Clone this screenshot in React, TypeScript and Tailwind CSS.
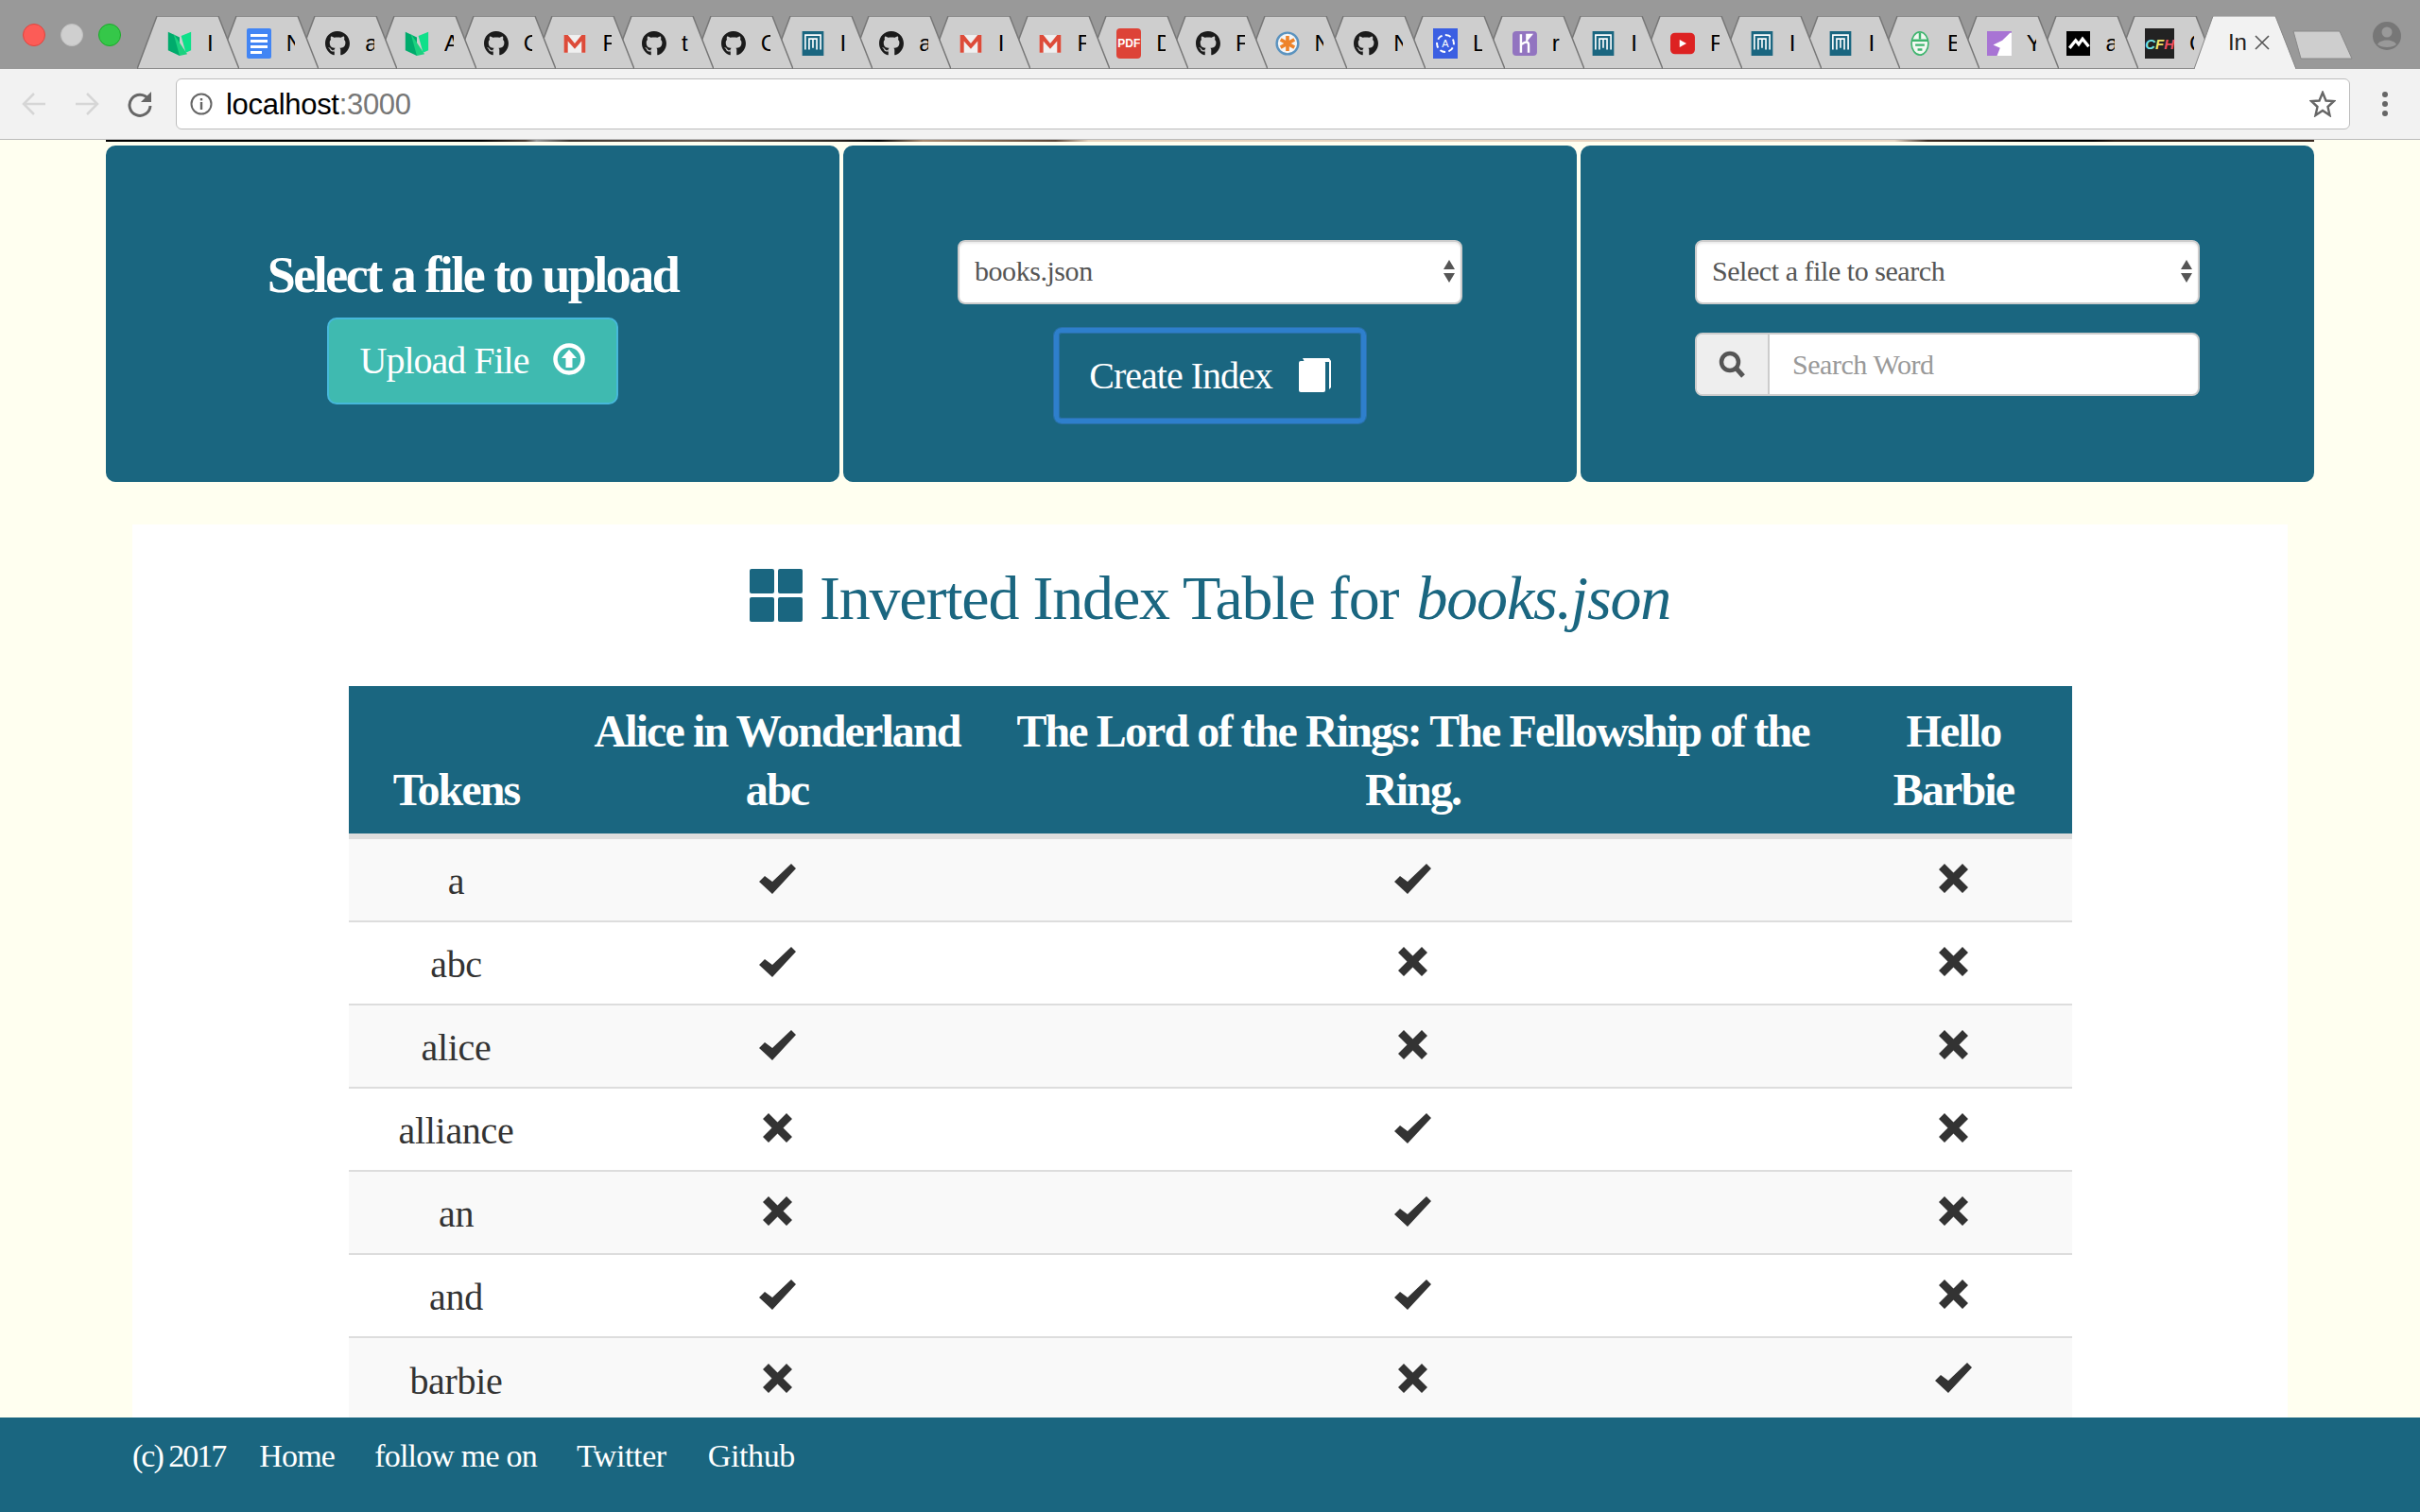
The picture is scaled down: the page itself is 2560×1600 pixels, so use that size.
import { FaGithub } from 'react-icons/fa';

const serif = { fontFamily: '"Liberation Serif", serif' };

type Fav = 'medium' | 'docs' | 'github' | 'gmail' | 'logo' | 'pdf' | 'orange' | 'angular' | 'heroku' | 'youtube' | 'mask' | 'purple' | 'mountain' | 'cfh';

const tabs: [Fav, string][] = [
  ['medium', 'I'], ['docs', 'N'], ['github', 'a'], ['medium', 'A'], ['github', 'C'], ['gmail', 'F'],
  ['github', 't'], ['github', 'C'], ['logo', 'I'], ['github', 'a'], ['gmail', 'I'], ['gmail', 'F'],
  ['pdf', 'D'], ['github', 'F'], ['orange', 'N'], ['github', 'N'], ['angular', 'L'], ['heroku', 'r'],
  ['logo', 'I'], ['youtube', 'F'], ['logo', 'I'], ['logo', 'I'], ['mask', 'E'], ['purple', 'Y'],
  ['mountain', 'a'], ['cfh', 'C'],
];

const rows: [string, boolean, boolean, boolean][] = [
  ['a', true, true, false],
  ['abc', true, false, false],
  ['alice', true, false, false],
  ['alliance', false, true, false],
  ['an', false, true, false],
  ['and', true, true, false],
  ['barbie', false, false, true],
];

function Favicon({ kind }: { kind: Fav }) {
  switch (kind) {
    case 'medium':
      return (
        <svg viewBox="0 0 32 32" className="w-8 h-8">
          <polygon points="1,1 16,8 16,32 1,25" fill="#00ab6c" />
          <polygon points="8,3 26,30 16,32" fill="#1bd17f" />
          <polygon points="18,6 31,1 31,25 24,28" fill="#0fe08a" />
        </svg>
      );
    case 'docs':
      return (
        <div className="w-8 h-8 rounded-[2px] bg-[#4285f4] flex flex-col items-center justify-center gap-[3px]">
          <div className="w-[18px] h-[3px] bg-white" />
          <div className="w-[18px] h-[3px] bg-white" />
          <div className="w-[18px] h-[3px] bg-white" />
          <div className="w-[12px] h-[3px] bg-white mr-[6px]" />
        </div>
      );
    case 'github':
      return <FaGithub className="w-8 h-8 text-[#1b1b1b]" />;
    case 'gmail':
      return (
        <svg viewBox="0 0 32 32" className="w-8 h-8">
          <rect x="2" y="5" width="28" height="23" fill="#f0f0f0" />
          <polygon points="2,5 7,5 16,16 25,5 30,5 30,28 25,28 25,13 16,23 7,13 7,28 2,28" fill="#dd4b39" />
        </svg>
      );
    case 'logo':
      return (
        <svg viewBox="0 0 32 32" className="w-8 h-8">
          <rect x="2" width="28" height="32" fill="#1a6680" />
          <path d="M6 24V5H26V24M11 24V10H16V22M16 10H21V24" fill="none" stroke="#fff" strokeWidth="2" />
        </svg>
      );
    case 'pdf':
      return (
        <div className="w-8 h-8 rounded-[4px] bg-[#dd4337] flex items-center justify-center text-white text-[12px] font-bold leading-none" style={{ fontFamily: '"Liberation Sans", sans-serif' }}>
          PDF
        </div>
      );
    case 'orange':
      return (
        <svg viewBox="0 0 32 32" className="w-8 h-8">
          <circle cx="16" cy="16" r="14" fill="#f5f5f5" stroke="#5b93bf" strokeWidth="3" />
          <path d="M16 6V26M7 11L25 21M7 21L25 11" stroke="#ee8329" strokeWidth="4.5" />
        </svg>
      );
    case 'angular':
      return (
        <div className="w-8 h-8 bg-[#3b5fe2] flex items-center justify-center">
          <div className="w-5 h-5 rounded-full border-2 border-dashed border-white text-white text-[11px] leading-4 text-center" style={{ fontFamily: '"Liberation Sans", sans-serif' }}>
            A
          </div>
        </div>
      );
    case 'heroku':
      return (
        <svg viewBox="0 0 32 32" className="w-8 h-8">
          <rect width="32" height="32" rx="5" fill="#9274c0" />
          <path d="M11 4V28M12 17C17 13 21 13 21 18V28M19 5L24 5L19 11Z" fill="none" stroke="#fff" strokeWidth="3" />
        </svg>
      );
    case 'youtube':
      return (
        <svg viewBox="0 0 32 32" className="w-8 h-8">
          <rect y="2" width="32" height="28" rx="6" fill="#dd2222" />
          <polygon points="12,11 21,16 12,21" fill="#fff" />
        </svg>
      );
    case 'mask':
      return (
        <svg viewBox="0 0 32 32" className="w-8 h-8">
          <ellipse cx="16" cy="16" rx="11" ry="15" fill="#f2f8f2" stroke="#3fb56f" strokeWidth="2" />
          <path d="M6 12H26M10 18H22M13 24H19M16 2V10" stroke="#3fb56f" strokeWidth="3" />
        </svg>
      );
    case 'purple':
      return (
        <svg viewBox="0 0 32 32" className="w-8 h-8">
          <rect width="32" height="32" fill="#a874d4" />
          <polygon points="30,2 32,2 32,32 13,32 17,22 8,18 20,12" fill="#fff" />
        </svg>
      );
    case 'mountain':
      return (
        <svg viewBox="0 0 32 32" className="w-8 h-8">
          <rect width="32" height="32" fill="#000" />
          <path d="M4 22L12 12L16 17L21 10L29 20" fill="none" stroke="#fff" strokeWidth="4" />
        </svg>
      );
    case 'cfh':
      return (
        <div className="w-8 h-8 bg-[#222] flex items-center justify-center text-[15px] italic font-bold leading-none" style={{ fontFamily: '"Liberation Sans", sans-serif' }}>
          <span className="text-[#6fe3e6]">C</span>
          <span className="text-[#f2e46b]">F</span>
          <span className="text-[#ee4d5f]">H</span>
        </div>
      );
  }
}

function Tab({ fav, label, index }: { fav: Fav; label: string; index: number }) {
  return (
    <div className="relative w-[83.7px] h-[56px] shrink-0" style={{ zIndex: 40 - index }}>
      <svg viewBox="0 0 108 56" className="absolute left-0 top-0 w-[108px] h-[56px]">
        <polygon points="0,56 21,0 86,0 108,56" fill="#cecece" stroke="#777" strokeWidth="1.5" />
      </svg>
      <div className="relative flex items-center h-full pl-[32px] gap-[16px] pt-[2px]">
        <Favicon kind={fav} />
        <span className="text-[24px] text-black w-[12px] overflow-hidden" style={{ fontFamily: '"Liberation Sans", sans-serif' }}>
          {label}
        </span>
      </div>
    </div>
  );
}

function BrowserChrome() {
  return (
    <div className="shrink-0" style={{ fontFamily: '"Liberation Sans", sans-serif' }}>
      <div className="h-[73px] bg-[#999999] flex items-end relative">
        <div className="flex items-center gap-[16px] pl-[24px] w-[145px] h-full shrink-0">
          <div className="w-6 h-6 rounded-full bg-[#fc5c57] border border-[#e0443e]" />
          <div className="w-6 h-6 rounded-full bg-[#cfcfcf] border border-[#c0c0c0]" />
          <div className="w-6 h-6 rounded-full bg-[#35c749] border border-[#1aab29]" />
        </div>
        <div className="flex items-end">
          {tabs.map(([fav, label], i) => (
            <Tab key={i} fav={fav} label={label} index={i} />
          ))}
          <div className="relative w-[106px] h-[56px] shrink-0 z-50">
            <svg viewBox="0 0 108 57" className="absolute left-0 top-0 w-[108px] h-[57px]">
              <polygon points="0,57 20,0 86,0 108,57" fill="#f2f2f2" />
              <path d="M0 56L20 0H86L108 56" fill="none" stroke="#888" strokeWidth="1" />
            </svg>
            <div className="relative flex items-center h-full pl-[36px] gap-[8px] text-[24px] text-[#222]">
              <span>In</span>
              <svg viewBox="0 0 16 16" className="w-4 h-4">
                <path d="M1 1L15 15M15 1L1 15" stroke="#555" strokeWidth="1.6" />
              </svg>
            </div>
          </div>
        </div>
        <svg viewBox="0 0 64 32" className="w-[64px] h-[32px] -ml-[2px] mb-[9px] shrink-0">
          <polygon points="1,1 50,1 63,30 9,30" fill="#cecece" stroke="#888" strokeWidth="1" />
        </svg>
        <svg viewBox="0 0 32 32" className="absolute right-[19px] top-[22px] w-8 h-8">
          <circle cx="16" cy="16" r="15" fill="#777" />
          <circle cx="16" cy="12" r="5.5" fill="#999" />
          <path d="M6 25C9 19 23 19 26 25C22 29 10 29 6 25Z" fill="#999" />
        </svg>
      </div>
      <div className="h-[75px] bg-[#f2f2f2] border-b border-[#bbbbbb] flex items-center">
        <div className="w-[186px] flex items-center pl-[22px] gap-[32px] shrink-0">
          <svg viewBox="0 0 28 28" className="w-7 h-7">
            <path d="M26 14H3M14 3L3 14L14 25" fill="none" stroke="#d6d6d6" strokeWidth="2.5" />
          </svg>
          <svg viewBox="0 0 28 28" className="w-7 h-7 -ml-[4px]">
            <path d="M2 14H25M14 3L25 14L14 25" fill="none" stroke="#d6d6d6" strokeWidth="2.5" />
          </svg>
          <svg viewBox="0 0 28 28" className="w-7 h-7 -ml-[4px]">
            <path d="M23 9A11 11 0 1 0 25 16" fill="none" stroke="#666" strokeWidth="3" />
            <polygon points="26,1 26,12 15,12" fill="#666" />
          </svg>
        </div>
        <div className="h-[54px] w-[2300px] bg-white border border-[#bdbdbd] rounded-[6px] flex items-center pl-[14px] pr-[14px] shrink-0">
          <svg viewBox="0 0 24 24" className="w-6 h-6 shrink-0">
            <circle cx="12" cy="12" r="10.5" fill="none" stroke="#666" strokeWidth="2" />
            <rect x="10.8" y="10" width="2.4" height="8" fill="#666" />
            <rect x="10.8" y="6" width="2.4" height="2.4" fill="#666" />
          </svg>
          <div className="ml-[14px] pt-[2px] text-[31px] tracking-[-0.3px] text-black">
            localhost<span className="text-[#777]">:3000</span>
          </div>
          <svg viewBox="0 0 28 28" className="w-7 h-7 ml-auto">
            <polygon points="14,2 17.5,10.5 26,11 19.5,17 21.5,26 14,21 6.5,26 8.5,17 2,11 10.5,10.5" fill="none" stroke="#666" strokeWidth="2.4" />
          </svg>
        </div>
        <div className="flex flex-col items-center gap-[4px] ml-[34px]">
          <div className="w-[6px] h-[6px] rounded-full bg-[#666]" />
          <div className="w-[6px] h-[6px] rounded-full bg-[#666]" />
          <div className="w-[6px] h-[6px] rounded-full bg-[#666]" />
        </div>
      </div>
    </div>
  );
}

function SelectBox({ value }: { value: string }) {
  return (
    <div className="relative w-[534px] h-[68px]">
      <select
        defaultValue={value}
        className="appearance-none w-full h-full pl-[16px] pb-[4px] bg-white border-2 border-[#cccccc] rounded-[8px] text-[30px] tracking-[-0.45px] text-[#555555] shadow-[inset_0_2px_2px_rgba(0,0,0,0.075)]"
        style={serif}
      >
        <option>{value}</option>
      </select>
      <svg viewBox="0 0 12 24" className="absolute right-[8px] top-[21px] w-3 h-6">
        <polygon points="6,0 12,10 0,10" fill="#555" />
        <polygon points="0,14 12,14 6,24" fill="#555" />
      </svg>
    </div>
  );
}

function CheckIcon() {
  return (
    <svg viewBox="0 0 39 32" className="inline-block w-[39px] h-8 align-middle">
      <polygon points="34,0 39,5 14,32 0,19 6,13 14,19" fill="#333" />
    </svg>
  );
}

function CrossIcon() {
  return (
    <svg viewBox="0 0 31 31" className="inline-block w-[31px] h-[31px] align-middle">
      <polygon points="0,6 6,0 15.5,9.5 25,0 31,6 21.5,15.5 31,25 25,31 15.5,21.5 6,31 0,25 9.5,15.5" fill="#333" />
    </svg>
  );
}

function Mark({ yes }: { yes: boolean }) {
  return (
    <td className="pb-[3px]">
      {yes ? <CheckIcon /> : <CrossIcon />}
    </td>
  );
}

function Panels() {
  return (
    <div className="grid grid-cols-3 gap-[4px] h-[356px] mt-[4px]">
      <div className="bg-[#1a6680] rounded-[10px] flex flex-col items-center pt-[108px]">
        <h2 className="text-[54px] leading-[58px] font-bold text-white tracking-[-2.5px]">Select a file to upload</h2>
        <button className="mt-[16px] w-[308px] h-[92px] flex items-center justify-center gap-[26px] bg-[#3fbab0] border-2 border-[#46b8da] rounded-[10px] text-white text-[40px] tracking-[-1px]" style={serif}>
          Upload File
          <svg viewBox="0 0 34 34" className="w-[34px] h-[34px] -mt-[4px]">
            <circle cx="17" cy="17" r="14.5" fill="none" stroke="#fff" strokeWidth="4.5" />
            <polygon points="17,7 25,16 20.5,16 20.5,26 13.5,26 13.5,16 9,16" fill="#fff" />
          </svg>
        </button>
      </div>
      <div className="bg-[#1a6680] rounded-[10px] flex flex-col items-center pt-[100px]">
        <SelectBox value="books.json" />
        <button className="mt-[25px] w-[330px] h-[101px] flex items-center justify-center gap-[28px] border-[5px] border-[#2e7fcc] rounded-[8px] shadow-[0_0_0_1px_#2a70a8,inset_0_0_0_1px_#2a70a8] text-white text-[40px] tracking-[-1px]" style={serif}>
          Create Index
          <svg viewBox="0 0 34 36" className="w-[34px] h-9 -mt-[2px]">
            <path d="M4 0H32L34 3V31L32 33V4H6Z" fill="#fff" />
            <rect y="3" width="28" height="33" rx="2" fill="#fff" />
          </svg>
        </button>
      </div>
      <div className="bg-[#1a6680] rounded-[10px] flex flex-col items-center pt-[100px]">
        <SelectBox value="Select a file to search" />
        <div className="mt-[30px] w-[534px] h-[67px] flex bg-white border-2 border-[#cccccc] rounded-[8px] overflow-hidden">
          <div className="w-[77px] bg-[#eeeeee] border-r-2 border-[#cccccc] flex items-center justify-center shrink-0">
            <svg viewBox="0 0 30 30" className="w-[30px] h-[30px]">
              <circle cx="12" cy="12" r="9" fill="none" stroke="#555" strokeWidth="4.5" />
              <path d="M18 18L26 27" stroke="#555" strokeWidth="5" />
            </svg>
          </div>
          <input
            placeholder="Search Word"
            className="flex-1 min-w-0 pl-[24px] text-[30px] tracking-[-0.45px] outline-none placeholder:text-[#999999]"
            style={serif}
          />
        </div>
      </div>
    </div>
  );
}

function IndexTable() {
  return (
    <table className="w-[1823px] table-fixed border-collapse text-center mx-auto">
      <colgroup>
        <col className="w-[228px]" />
        <col className="w-[451px]" />
        <col className="w-[894px]" />
        <col className="w-[250px]" />
      </colgroup>
      <thead>
        <tr className="bg-[#1a6680] text-white h-[159px] border-b-[6px] border-[#dddddd]">
          {['Tokens', 'Alice in Wonderland abc', 'The Lord of the Rings: The Fellowship of the Ring.', 'Hello Barbie'].map(h => (
            <th key={h} className="px-[24px] pb-[15px] align-bottom text-[48px] leading-[62px] font-bold tracking-[-1.9px]">
              {h}
            </th>
          ))}
        </tr>
      </thead>
      <tbody>
        {rows.map(([token, a, b, c], i) => (
          <tr key={token} className={`h-[88px] border-t-2 border-[#dddddd] first:border-t-0 first:h-[90px] ${i % 2 === 0 ? 'bg-[#f9f9f9]' : 'bg-white'}`}>
            <td className="text-[40px] tracking-[-0.3px] text-[#333333] pt-[4px]">{token}</td>
            <Mark yes={a} />
            <Mark yes={b} />
            <Mark yes={c} />
          </tr>
        ))}
      </tbody>
    </table>
  );
}

export default function App() {
  return (
    <div className="w-full h-screen flex flex-col overflow-hidden bg-[#fffff0]" style={serif}>
      <BrowserChrome />
      <main className="flex-1 min-h-0 overflow-hidden px-[112px]">
        <div className="h-[2px] bg-[linear-gradient(90deg,#000_0%,#000_17%,#4a3a30_19%,#999_19.5%,#3b342e_21%,#6a5a50_27%,#2a2520_33%,#000_35%,#a88a70_37%,#5c4536_43%,#e6d2bc_44.5%,#e8d6c4_81%,#3a2a20_82.5%,#000_87%,#000_90%,#2a1c14_91%,#3a2a20_100%)]" />
        <Panels />
        <section className="mt-[45px] mx-[28px] bg-white h-[2000px]">
          <h1 className="flex items-center justify-center gap-[18px] pb-[17px] h-[171px] text-[66px] tracking-[-1.2px] text-[#1a6680] font-normal">
            <svg viewBox="0 0 56 56" className="w-[56px] h-[56px] -mt-[4px]">
              <rect width="26" height="26" rx="2" fill="#1a6680" />
              <rect x="30" width="26" height="26" rx="2" fill="#1a6680" />
              <rect y="30" width="26" height="26" rx="2" fill="#1a6680" />
              <rect x="30" y="30" width="26" height="26" rx="2" fill="#1a6680" />
            </svg>
            <span>
              Inverted Index Table for <em className="ml-[4px]">books.json</em>
            </span>
          </h1>
          <IndexTable />
        </section>
      </main>
      <footer className="h-[100px] shrink-0 bg-[#1a6680] text-white text-[34px] tracking-[-0.8px] flex items-start pt-[15px] pl-[140px]">
        <span className="tracking-[-2px]">(c) 2017</span>
        <a className="ml-[36px]">Home</a>
        <a className="ml-[42px]">follow me on</a>
        <a className="ml-[42px] tracking-[-0.4px]">Twitter</a>
        <a className="ml-[44px] tracking-[-0.4px]">Github</a>
      </footer>
    </div>
  );
}
